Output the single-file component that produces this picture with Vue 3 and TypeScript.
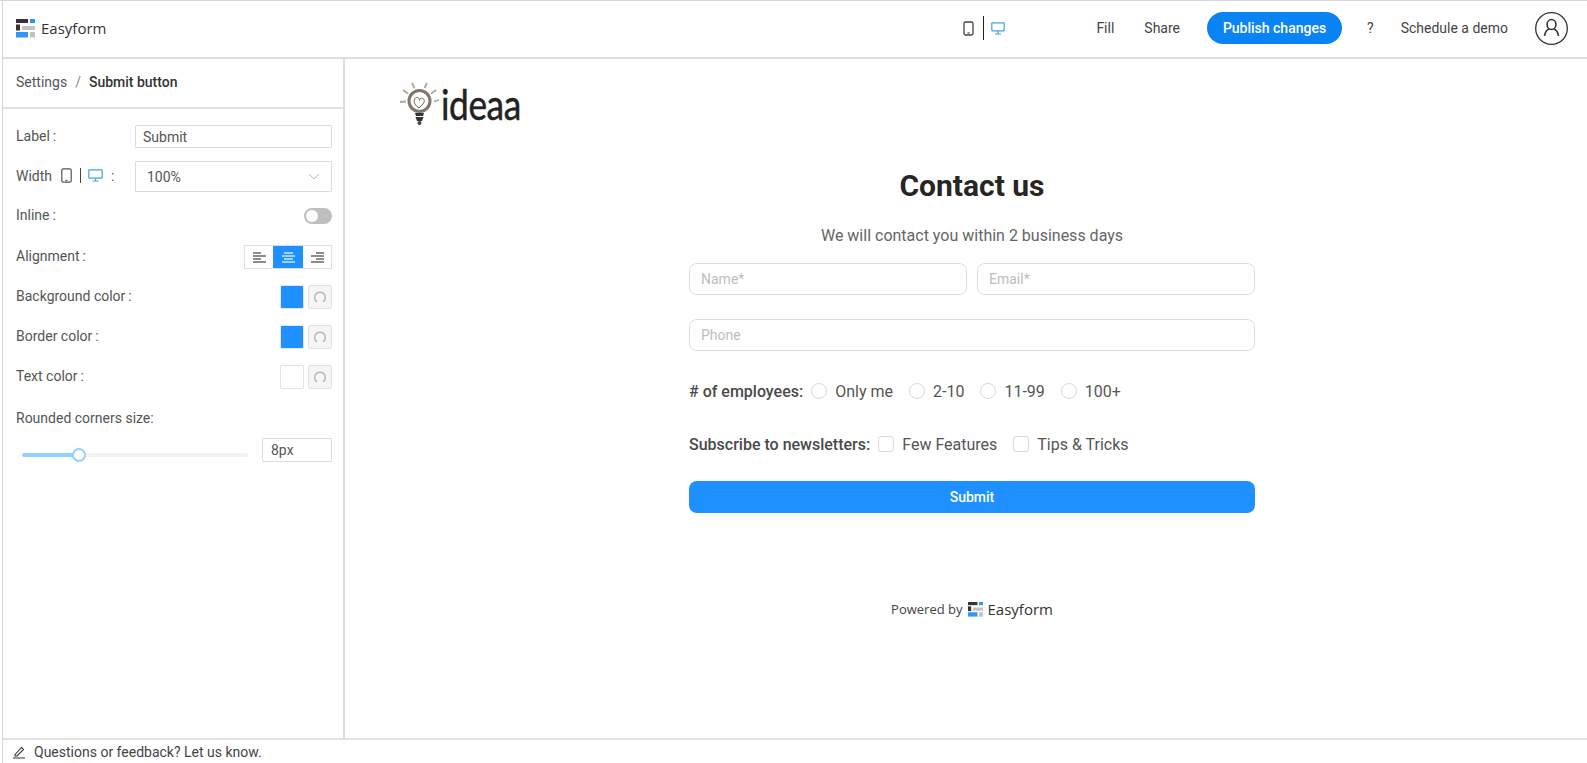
<script setup lang="ts">
const settings = [
  { label: 'Background color', color: '#1e90ff' },
  { label: 'Border color', color: '#1e90ff' },
  { label: 'Text color', color: '#ffffff' },
]

const employeeOptions = ['Only me', '2-10', '11-99', '100+']
const newsletterOptions = ['Few Features', 'Tips & Tricks']

const alignLines = [
  { id: 'left', lines: ['M1 2h8', 'M1 5h13', 'M1 8h8', 'M1 11h13'] },
  { id: 'center', lines: ['M3 2h9', 'M1 5h13', 'M3 8h9', 'M1 11h13'] },
  { id: 'right', lines: ['M6 2h8', 'M1 5h13', 'M6 8h8', 'M1 11h13'] },
]
</script>

<template>
  <div class="page">
    <header class="topbar">
      <div class="brand">
        <svg class="brand-mark" width="19" height="19" viewBox="0 0 19 19">
          <rect x="0" y="0" width="12" height="4" fill="#3a3237" />
          <rect x="14" y="0" width="5" height="4" fill="#2f96f3" />
          <rect x="0" y="5.5" width="4" height="6" fill="#3a3237" />
          <rect x="6" y="7" width="13" height="4" fill="#c4c2c2" />
          <rect x="0" y="13" width="12" height="5.5" fill="#2f96f3" />
          <rect x="14" y="13" width="5" height="5.5" fill="#c4c2c2" />
        </svg>
        <span class="brand-name">Easyform</span>
      </div>
      <div class="device-switch">
        <svg width="11" height="15" viewBox="0 0 11 15" fill="none" stroke="#444" stroke-width="1.3">
          <rect x="1" y="1" width="9" height="13" rx="1.5" />
          <path d="M4.5 12h2" />
        </svg>
        <span class="device-sep"></span>
        <svg width="14" height="13" viewBox="0 0 14 13" fill="none" stroke="#3fa6d8" stroke-width="1.2">
          <rect x="0.8" y="0.8" width="12.4" height="8" rx="0.5" />
          <path d="M7 9v3M4 12h6" />
        </svg>
      </div>
      <nav class="top-actions">
        <a class="top-link">Fill</a>
        <a class="top-link">Share</a>
        <button class="publish">Publish changes</button>
        <a class="top-link help">?</a>
        <a class="top-link">Schedule a demo</a>
        <span class="avatar">
          <svg width="33" height="33" viewBox="0 0 33 33" fill="none" stroke="#333" stroke-width="1.3">
            <circle cx="16.5" cy="16.5" r="15.8" />
            <ellipse cx="16.5" cy="12.5" rx="4.4" ry="5" stroke-width="1.6" />
            <path d="M9.5 24c.6-4 3-6.5 4.8-7M23.5 24c-.6-4-3-6.5-4.8-7" stroke-width="1.6" />
          </svg>
        </span>
      </nav>
    </header>

    <div class="body">
      <aside class="sidebar">
        <div class="crumbs">
          <span>Settings</span>
          <span class="crumb-sep">/</span>
          <strong>Submit button</strong>
        </div>
        <div class="fields">
          <div class="row row-label">
            <label>Label<i>:</i></label>
            <input class="text-input" value="Submit" readonly />
          </div>
          <div class="row row-width">
            <label class="width-label">
              Width
              <svg width="11" height="15" viewBox="0 0 11 15" fill="none" stroke="#555" stroke-width="1.2">
                <rect x="0.8" y="0.8" width="9.4" height="13.4" rx="1.4" />
                <path d="M4.500 12.400h2" />
              </svg>
              <span class="width-sep"></span>
              <svg width="15" height="13" viewBox="0 0 15 13" fill="none" stroke="#3fa6d8" stroke-width="1.2">
                <rect x="0.8" y="0.8" width="13.4" height="8.4" rx="0.5" />
                <path d="M7.5 9.5v2.5M4.5 12h6" />
              </svg>
              <i>:</i>
            </label>
            <div class="select">
              <span>100%</span>
              <svg width="12" height="7" viewBox="0 0 12 7" fill="none" stroke="#bbb" stroke-width="1">
                <path d="M1 1l5 5 5-5" />
              </svg>
            </div>
          </div>
          <div class="row row-inline">
            <label>Inline<i>:</i></label>
            <span class="toggle"><span class="toggle-knob"></span></span>
          </div>
          <div class="row row-align">
            <label>Alignment<i>:</i></label>
            <div class="align-group">
              <span
                v-for="item in alignLines"
                :key="item.id"
                class="align-btn"
                :class="{ active: item.id === 'center' }"
              >
                <svg width="15" height="13" viewBox="0 0 15 13" fill="none" stroke="currentColor" stroke-width="1.5">
                  <path v-for="d in item.lines" :key="d" :d="d" />
                </svg>
              </span>
            </div>
          </div>
          <div v-for="item in settings" :key="item.label" class="row row-color">
            <label>{{ item.label }}<i>:</i></label>
            <div class="color-tools">
              <span class="swatch" :style="{ background: item.color }"></span>
              <span class="reset">
                <svg width="12" height="12" viewBox="0 0 12 12" fill="none" stroke="#aaa" stroke-width="1.2">
                  <path d="M3 10.800A5.300 5.300 0 1 1 9 10.800" />
                </svg>
              </span>
            </div>
          </div>
          <div class="corners-title">Rounded corners size:</div>
          <div class="corners">
            <div class="slider">
              <span class="slider-fill"></span>
              <span class="slider-thumb"></span>
            </div>
            <input class="text-input corners-input" value="8px" readonly />
          </div>
        </div>
      </aside>

      <main class="canvas">
        <div class="logo">
          <svg width="41" height="46" viewBox="0 0 41 46" fill="none">
            <g stroke="#b0a596" stroke-width="1.8">
              <path d="M0 21l6-.5M3 9l5 3.500M12 2l2.500 5M27 2l-2.500 5M36 9l-5 3.500M39 19l-5 1.500" />
            </g>
            <circle cx="19.500" cy="20" r="10.500" stroke="#7f7769" stroke-width="3" />
            <path d="M19 27c-5-3-6-8-3.500-10 2-1.500 4 0 4 2.500 0-2.500 3.500-3 4.500-1 1.500 3-2.500 6-5 8.500z" stroke="#8a5a4a" stroke-width="1" />
            <path d="M15 32h9l-1 3h-7zM15.500 36h8l-1.500 4h-5z" fill="#333" />
            <circle cx="19.500" cy="42" r="2" fill="#444" />
          </svg>
          <span class="logo-text">ideaa</span>
        </div>

        <form class="contact" @submit.prevent>
          <h1>Contact us</h1>
          <p class="subtitle">We will contact you within 2 business days</p>
          <div class="name-row">
            <input class="form-input" placeholder="Name*" />
            <input class="form-input" placeholder="Email*" />
          </div>
          <input class="form-input phone" placeholder="Phone" />
          <div class="choice-row employees">
            <span class="choice-title">
              # of employees:
            </span>
            <span v-for="option in employeeOptions" :key="option" class="choice">
              <span class="radio"></span>{{ option }}
            </span>
          </div>
          <div class="choice-row newsletters">
            <span class="choice-title">
              Subscribe to newsletters:
            </span>
            <span v-for="option in newsletterOptions" :key="option" class="choice">
              <span class="checkbox"></span>{{ option }}
            </span>
          </div>
          <button class="submit" type="submit">Submit</button>
          <div class="powered">
            <span class="powered-by">Powered by</span>
            <svg width="15" height="15" viewBox="0 0 19 19">
              <rect x="0" y="0" width="12" height="4" fill="#3a3237" />
              <rect x="14" y="0" width="5" height="4" fill="#2f96f3" />
              <rect x="0" y="5.5" width="4" height="6" fill="#3a3237" />
              <rect x="6" y="7" width="13" height="4" fill="#c4c2c2" />
              <rect x="0" y="13" width="12" height="5.500" fill="#2f96f3" />
              <rect x="14" y="13" width="5" height="5.500" fill="#c4c2c2" />
            </svg>
            <span class="powered-name">Easyform</span>
          </div>
        </form>
      </main>
    </div>

    <footer class="feedback">
      <svg width="14" height="14" viewBox="0 0 14 14" fill="none" stroke="#333" stroke-width="1.1">
        <path d="M3 9.500L9.500 2.500l2 2L5 11H3zM1 13h12" />
      </svg>
      <span>Questions or feedback? Let us know.</span>
    </footer>
  </div>
</template>

<style>
html,
body {
  margin: 0;
  background: #fff;
}
</style>

<style scoped>
* {
  box-sizing: border-box;
}

.page {
  display: flex;
  flex-direction: column;
  height: 763px;
  overflow: hidden;
  border-top: 1px solid #d6d6da;
  padding-left: 2px;
  font-family: Roboto, "Liberation Sans", sans-serif;
  font-size: 14px;
  color: #555;
  background: #fff;
  position: relative;
}

.page::before {
  content: '';
  position: absolute;
  left: 2px;
  top: 0;
  bottom: 0;
  width: 1px;
  background: #d6d6da;
}

.topbar {
  display: flex;
  align-items: center;
  height: 58px;
  flex: none;
  padding: 0 19px 2px 14px;
  border-bottom: 2px solid #dedee0;
}

.brand {
  display: flex;
  align-items: center;
  gap: 6px;
}

.brand-name {
  font-family: "Open Sans", sans-serif;
  font-size: 15px;
  color: #333;
}

.device-switch {
  display: flex;
  align-items: center;
  margin-left: 857px;
  gap: 0;
}

.device-sep {
  width: 1px;
  height: 24px;
  margin: 0 7px 0 9px;
  background: #222;
}

.top-actions {
  display: flex;
  align-items: center;
  margin-left: auto;
}

.top-link {
  color: #444;
  font-size: 14px;
}

.top-link + .top-link {
  margin-left: 30px;
}

.publish {
  height: 32px;
  width: 135px;
  margin: 0 25px 0 27px;
  border: none;
  border-radius: 16px;
  background: #0a84f5;
  color: #fff;
  font: 500 14px Roboto, sans-serif;
}

.help + .top-link {
  margin-left: 27px;
}

.avatar {
  display: flex;
  margin-left: 27px;
}

.body {
  display: flex;
  flex: 1;
  min-height: 0;
}

.sidebar {
  width: 343px;
  flex: none;
  border-right: 2px solid #dedee0;
}

.crumbs {
  display: flex;
  align-items: center;
  height: 50px;
  padding: 0 14px 2px;
  border-bottom: 2px solid #e2e2e4;
  color: #555;
}

.crumb-sep {
  margin: 0 8px;
  color: #888;
}

.crumbs strong {
  font-weight: 500;
  color: #333;
}

.fields {
  padding: 16px 11px 0 14px;
}

.row {
  display: flex;
  align-items: center;
  justify-content: space-between;
}

.row > label {
  padding-bottom: 2px;
}

.row label i {
  font-style: normal;
  margin-left: 3px;
}

.row-label {
  height: 23px;
}

.row-width {
  height: 31px;
  margin-top: 13px;
}

.row-inline {
  height: 16px;
  margin-top: 16px;
}

.row-align {
  height: 24px;
  margin-top: 21px;
}

.row-color {
  height: 24px;
  margin-top: 16px;
}

.width-label {
  display: flex;
  align-items: center;
  gap: 0;
}

.width-label svg:first-of-type {
  margin-left: 9px;
}

.width-sep {
  width: 1px;
  height: 15px;
  margin: 0 7px 0 8px;
  background: #444;
}

.row .width-label i {
  margin-left: 8px;
}

.text-input {
  width: 197px;
  height: 23px;
  padding: 0 7px;
  border: 1px solid #dcdcdc;
  border-radius: 1px;
  font: 14px Roboto, sans-serif;
  color: #555;
  outline: none;
}

.select {
  display: flex;
  align-items: center;
  justify-content: space-between;
  width: 197px;
  height: 31px;
  padding: 0 11px 0 11px;
  border: 1px solid #dcdcdc;
  border-radius: 1px;
}

.toggle {
  position: relative;
  display: block;
  width: 28px;
  height: 16px;
  border-radius: 8px;
  background: #bfbfbf;
}

.toggle-knob {
  position: absolute;
  left: 2px;
  top: 2px;
  width: 12px;
  height: 12px;
  border-radius: 50%;
  background: #fff;
}

.align-group {
  display: flex;
  border: 1px solid #dfdfdf;
  height: 24px;
}

.align-btn {
  display: flex;
  align-items: center;
  justify-content: center;
  width: 28px;
  color: #666;
}

.align-btn.active {
  width: 30px;
  background: #1e90ff;
  color: #cfe6ff;
}

.color-tools {
  display: flex;
  gap: 4px;
}

.swatch {
  width: 24px;
  height: 24px;
  border: 1px solid #e4e4e4;
  border-radius: 2px;
}

.reset {
  display: flex;
  align-items: center;
  justify-content: center;
  width: 24px;
  height: 24px;
  border: 1px solid #e2e2e2;
  border-radius: 2px;
  background: #f5f5f5;
}

.corners-title {
  margin-top: 19px;
  line-height: 20px;
}

.corners {
  display: flex;
  align-items: center;
  justify-content: space-between;
  margin-top: 10px;
}

.slider {
  position: relative;
  width: 226px;
  height: 4px;
  margin: 9px 0 0 6px;
  border-radius: 2px;
  background: #f2f2f2;
}

.slider-fill {
  position: absolute;
  left: 0;
  top: 0;
  bottom: 0;
  width: 56px;
  border-radius: 2px;
  background: #91d0ff;
}

.slider-thumb {
  position: absolute;
  left: 50px;
  top: -5px;
  width: 14px;
  height: 14px;
  border: 2px solid #91d0ff;
  border-radius: 50%;
  background: #fff;
}

.corners-input {
  width: 70px;
  height: 24px;
  padding: 0 8px;
}

.canvas {
  flex: 1;
  min-width: 0;
  position: relative;
  padding: 22px 0 0 55px;
}

.logo {
  display: flex;
  align-items: flex-start;
  height: 46px;
}

.logo-text {
  font-family: Lato, sans-serif;
  font-size: 43px;
  line-height: 46px;
  color: #222;
  letter-spacing: -0.5px;
  -webkit-text-stroke: 0.5px #222;
  transform: scaleX(0.82);
  transform-origin: left center;
}

.contact {
  display: flex;
  flex-direction: column;
  width: 566px;
  margin: 37px 0 0 289px;
}

.contact h1 {
  margin: 0;
  font-size: 30px;
  font-weight: 700;
  line-height: 44px;
  color: #262626;
  text-align: center;
}

.subtitle {
  margin: 16px 0 0;
  font-size: 16px;
  line-height: 24px;
  color: #666;
  text-align: center;
}

.name-row {
  display: flex;
  gap: 10px;
  margin-top: 15px;
}

.form-input {
  flex: 1;
  min-width: 0;
  height: 32px;
  padding: 0 11px;
  border: 1px solid #dedede;
  border-radius: 8px;
  font: 14px Roboto, sans-serif;
  outline: none;
}

.form-input::placeholder {
  color: #bdbdbd;
}

.phone {
  flex: none;
  width: 100%;
  margin-top: 24px;
}

.choice-row {
  display: flex;
  align-items: center;
  height: 24px;
  font-size: 16px;
  color: #555;
}

.employees {
  margin-top: 28px;
}

.newsletters {
  margin-top: 29px;
}

.choice-title {
  font-size: 16px;
  font-weight: 500;
  color: #4a4a4a;
  margin-right: 8px;
}

.choice {
  display: flex;
  align-items: center;
  margin-right: 16px;
}

.radio {
  width: 16px;
  height: 16px;
  margin-right: 8px;
  border: 1px solid #d9d9d9;
  border-radius: 50%;
}

.checkbox {
  width: 16px;
  height: 16px;
  margin-right: 8px;
  border: 1px solid #d9d9d9;
  border-radius: 3px;
}

.submit {
  height: 32px;
  margin-top: 25px;
  border: none;
  border-radius: 8px;
  background: #1e90ff;
  color: #fff;
  font: 500 14px Roboto, sans-serif;
}

.powered {
  display: flex;
  align-items: center;
  justify-content: center;
  gap: 5px;
  margin-top: 86px;
}

.powered-by {
  font-family: "Open Sans", sans-serif;
  font-size: 13px;
  color: #444;
}

.powered-name {
  font-family: "Open Sans", sans-serif;
  font-size: 15px;
  color: #333;
}

.feedback {
  display: flex;
  align-items: center;
  gap: 8px;
  flex: none;
  height: 25px;
  padding: 0 10px;
  border-top: 2px solid #e2e2e4;
  color: #444;
}
</style>
